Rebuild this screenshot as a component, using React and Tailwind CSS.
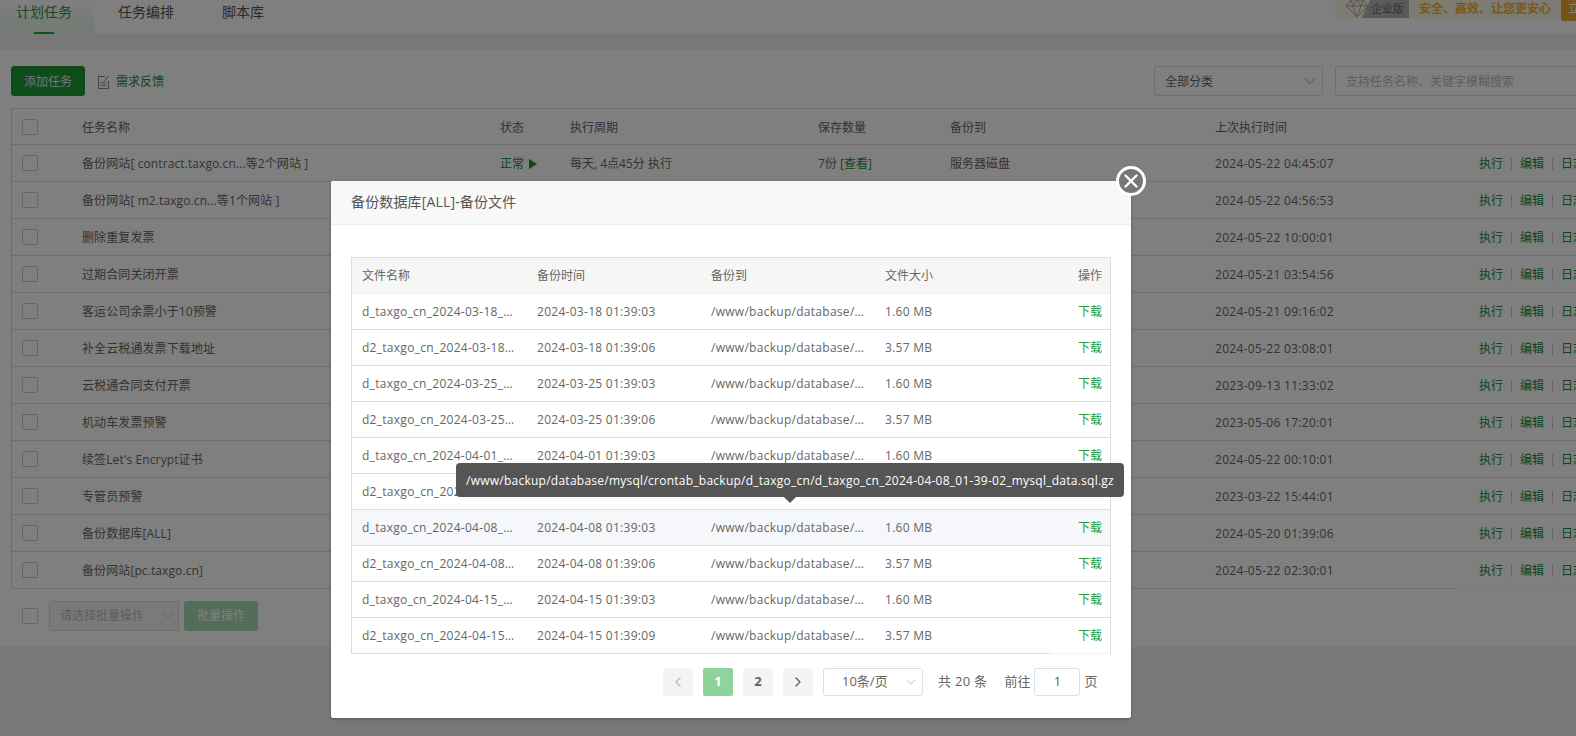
import React from "react";
import { ChevronDown, ChevronLeft, ChevronRight } from "lucide-react";

const tasks = [
  { name: "备份网站[ contract.taxgo.cn...等2个网站 ]", last: "2024-05-22 04:45:07" },
  { name: "备份网站[ m2.taxgo.cn...等1个网站 ]", last: "2024-05-22 04:56:53" },
  { name: "删除重复发票", last: "2024-05-22 10:00:01" },
  { name: "过期合同关闭开票", last: "2024-05-21 03:54:56" },
  { name: "客运公司余票小于10预警", last: "2024-05-21 09:16:02" },
  { name: "补全云税通发票下载地址", last: "2024-05-22 03:08:01" },
  { name: "云税通合同支付开票", last: "2023-09-13 11:33:02" },
  { name: "机动车发票预警", last: "2023-05-06 17:20:01" },
  { name: "续签Let's Encrypt证书", last: "2024-05-22 00:10:01" },
  { name: "专管员预警", last: "2023-03-22 15:44:01" },
  { name: "备份数据库[ALL]", last: "2024-05-20 01:39:06" },
  { name: "备份网站[pc.taxgo.cn]", last: "2024-05-22 02:30:01" },
];

const backups = [
  ["d_taxgo_cn", "2024-03-18", "01:39:03", "1.60 MB"],
  ["d2_taxgo_cn", "2024-03-18", "01:39:06", "3.57 MB"],
  ["d_taxgo_cn", "2024-03-25", "01:39:03", "1.60 MB"],
  ["d2_taxgo_cn", "2024-03-25", "01:39:06", "3.57 MB"],
  ["d_taxgo_cn", "2024-04-01", "01:39:03", "1.60 MB"],
  ["d2_taxgo_cn", "2024-04-01", "01:39:06", "3.57 MB"],
  ["d_taxgo_cn", "2024-04-08", "01:39:03", "1.60 MB"],
  ["d2_taxgo_cn", "2024-04-08", "01:39:06", "3.57 MB"],
  ["d_taxgo_cn", "2024-04-15", "01:39:03", "1.60 MB"],
  ["d2_taxgo_cn", "2024-04-15", "01:39:09", "3.57 MB"],
];

const Checkbox = () => (
  <span className="block w-4 h-4 rounded-[2px] border border-[#ccc] bg-white" />
);

const Actions = () => (
  <div className="flex items-center text-[#1c8a32] whitespace-nowrap">
    <span>执行</span>
    <span className="mx-[8px] h-3 w-px bg-[#ccc]" />
    <span>编辑</span>
    <span className="mx-[8px] h-3 w-px bg-[#ccc]" />
    <span>日志</span>
  </div>
);

const TaskTable = () => (
  <table className="w-[1640px] table-fixed border-separate border-spacing-0 border-t border-l border-[#ddd] text-[12px] text-[#666]">
    <colgroup>
      <col className="w-[60px]" />
      <col className="w-[418px]" />
      <col className="w-[70px]" />
      <col className="w-[248px]" />
      <col className="w-[132px]" />
      <col className="w-[265px]" />
      <col className="w-[249px]" />
      <col />
    </colgroup>
    <thead>
      <tr className="h-9">
        <th className="pl-[10px] border-b border-[#ddd] font-normal text-left"><Checkbox /></th>
        <th className="pl-[10px] pt-[2px] border-b border-[#ddd] font-normal text-left">任务名称</th>
        <th className="pl-[10px] pt-[2px] border-b border-[#ddd] font-normal text-left">状态</th>
        <th className="pl-[10px] pt-[2px] border-b border-[#ddd] font-normal text-left">执行周期</th>
        <th className="pl-[10px] pt-[2px] border-b border-[#ddd] font-normal text-left">保存数量</th>
        <th className="pl-[10px] pt-[2px] border-b border-[#ddd] font-normal text-left">备份到</th>
        <th className="pl-[10px] pt-[2px] border-b border-[#ddd] font-normal text-left">上次执行时间</th>
        <th className="border-b border-[#ddd]" />
      </tr>
    </thead>
    <tbody>
      {tasks.map((task, i) => (
        <tr key={task.name} className="h-[37px]">
          <td className="pl-[10px] border-b border-[#ddd]"><Checkbox /></td>
          <td className="pl-[10px] pt-[2px] border-b border-[#ddd] whitespace-nowrap tracking-[0.1px]">{task.name}</td>
          <td className="pl-[10px] pt-[2px] border-b border-[#ddd] text-[#1c8a32] whitespace-nowrap">
            {i === 0 && (
              <span className="inline-flex items-center gap-[5px]">
                正常
                <span className="w-0 h-0 border-y-[5px] border-l-[8px] border-y-transparent border-l-[#1c8a32]" />
              </span>
            )}
          </td>
          <td className="pl-[10px] pt-[2px] border-b border-[#ddd] whitespace-nowrap">{i === 0 && "每天, 4点45分 执行"}</td>
          <td className="pl-[10px] pt-[2px] border-b border-[#ddd] whitespace-nowrap">
            {i === 0 && (
              <>
                7份 <span className="text-[#1c8a32]">[查看]</span>
              </>
            )}
          </td>
          <td className="pl-[10px] pt-[2px] border-b border-[#ddd] whitespace-nowrap">{i === 0 && "服务器磁盘"}</td>
          <td className="pl-[10px] pt-[2px] border-b border-[#ddd] whitespace-nowrap tracking-[0.3px]">{task.last}</td>
          <td className={`pl-[25px] pt-[2px] border-b ${i === 11 ? "border-[#f4f4f4]" : "border-[#ddd]"}`}><Actions /></td>
        </tr>
      ))}
    </tbody>
  </table>
);

const PageButton = ({ children, className = "" }) => (
  <span className={`w-[30px] h-[28px] rounded-[2px] flex items-center justify-center text-[13px] font-bold ${className}`}>
    {children}
  </span>
);

const BackupModal = () => (
  <div className="absolute left-[331px] top-[181px] w-[800px] h-[537px] bg-white rounded-[2px] shadow-[0_1px_3px_rgba(0,0,0,0.3)] text-[12px] text-[#666]">
    <div className="h-[44px] flex items-center pl-5 pb-[2px] bg-[#f8f8f8] border-b border-[#eee] rounded-t-[2px] text-[14px] text-[#555] tracking-[0.15px]">
      备份数据库[ALL]-备份文件
    </div>
    <div className="mt-[32px] mx-5 w-[760px] border-t border-x border-[#ddd]">
      <table className="w-full table-fixed border-separate border-spacing-0">
        <colgroup>
          <col className="w-[175px]" />
          <col className="w-[174px]" />
          <col className="w-[174px]" />
          <col className="w-[175px]" />
          <col />
        </colgroup>
        <thead>
          <tr className="h-9 bg-[#f6f6f6]">
            <th className="px-[10px] pt-px border-b border-[#eee] font-normal text-left">文件名称</th>
            <th className="px-[10px] pt-px border-b border-[#eee] font-normal text-left">备份时间</th>
            <th className="px-[10px] pt-px border-b border-[#eee] font-normal text-left">备份到</th>
            <th className="px-[10px] pt-px border-b border-[#eee] font-normal text-left">文件大小</th>
            <th className="pr-2 pt-px border-b border-[#eee] font-normal text-right">操作</th>
          </tr>
        </thead>
        <tbody>
          {backups.map(([db, date, time, size], i) => {
            const file = `${db}_${date}_01-39-02_mysql_data.sql.gz`;
            return (
              <tr key={file} className={`h-9 tracking-[0.28px] ${i === 6 ? "bg-[#f5f7fa]" : ""}`}>
                <td className="px-[10px] pt-px border-b border-[#ddd] truncate">{file}</td>
                <td className="px-[10px] pt-px border-b border-[#ddd] truncate">{date} {time}</td>
                <td className="px-[10px] pt-px border-b border-[#ddd] truncate">/www/backup/database/mysql/crontab_backup/{db}/{file}</td>
                <td className="px-[10px] pt-px border-b border-[#ddd] truncate">{size}</td>
                <td className={`pr-2 pt-px border-b text-right text-[#259c40] tracking-normal ${i === 9 ? "border-[#f4f4f4]" : "border-[#ddd]"}`}>下载</td>
              </tr>
            );
          })}
        </tbody>
      </table>
    </div>
    <div className="mt-[14px] flex items-center pl-[332px] text-[13px] text-[#666]">
      <PageButton className="bg-[#f4f4f5] text-[#bbb]"><ChevronLeft size={16} /></PageButton>
      <PageButton className="ml-[10px] bg-[#90d29c] text-white">1</PageButton>
      <PageButton className="ml-[10px] bg-[#f4f4f5] text-[#606266]">2</PageButton>
      <PageButton className="ml-[10px] bg-[#f4f4f5] text-[#606266]"><ChevronRight size={16} /></PageButton>
      <div className="ml-[10px] w-[100px] h-[28px] flex items-center justify-between border border-[#dcdfe6] rounded-[3px] pl-[18px] pr-[3px]">
        <span>10条/页</span>
        <ChevronDown size={16} strokeWidth={1} className="text-[#aaa]" />
      </div>
      <span className="ml-[15px] tracking-[0.3px]">共 20 条</span>
      <span className="ml-[17px]">前往</span>
      <span className="ml-[4px] w-[46px] h-[28px] flex items-center justify-center border border-[#dcdfe6] rounded-[3px]">1</span>
      <span className="ml-[4px]">页</span>
    </div>
  </div>
);

export default function App() {
  return (
    <div className="relative h-screen overflow-hidden bg-[#f0f0f0] font-['Open_Sans','Noto_Sans_CJK_SC',sans-serif]">
      <div className="h-[34px] bg-white flex text-[14px] text-[#555]">
        <div className="relative pl-4 pr-[22px] pt-[1px] h-full bg-linear-to-b from-white to-[#e3f3e6] text-[#2a9444]">
          计划任务
          <span className="absolute left-[34px] bottom-0 w-5 h-[2px] bg-[#20a53a]" />
        </div>
        <div className="px-6 pt-[1px]">任务编排</div>
        <div className="px-6 pt-[1px]">脚本库</div>
        <div className="ml-auto flex items-start">
          <div className="relative h-[19px] w-[226px] flex bg-[#fdf6e6] rounded-b-[2px]">
            <span className="ml-[27px] w-[47px] h-[18px] bg-[#b4b4b4] text-[11px] text-[#666] text-right pr-[5px] leading-[18px] [clip-path:polygon(8px_0,100%_0,100%_100%,0_100%)]">企业版</span>
            <svg className="absolute left-[10px] -top-[2px]" width="24" height="20" viewBox="0 0 24 20" fill="#fdf6e6" stroke="#aaa" strokeWidth="1">
              <path d="M6 2h12l5 6-11 11L1 8z" />
              <path d="M1 8h22M8 8l4 11 4-11M6 2l2 6 4-6 4 6 2-6" fill="none" />
            </svg>
            <span className="ml-[10px] text-[12px] font-bold text-[#f2b232] leading-[18px] whitespace-nowrap">安全、高效、让您更安心</span>
          </div>
          <div className="w-[15px] h-[21px] bg-[#eaa82a] text-[#fff] text-[12px] pl-[7px] rounded-bl-[2px] overflow-hidden whitespace-nowrap">立</div>
        </div>
      </div>

      <div className="mt-4 h-[597px] bg-white overflow-hidden pt-4">
        <div className="flex h-[30px] pl-[11px]">
          <button className="w-[74px] pt-[2px] rounded-[3px] bg-[#1d9a35] text-[12px] text-[#e8e8e8]">添加任务</button>
          <div className="ml-3 pt-[2px] flex items-center gap-[6px] text-[12px] text-[#1c8a32]">
            <svg width="13" height="15" viewBox="0 0 13 15" fill="none" stroke="#888" strokeWidth="1">
              <path d="M8 1.5H1.5v12h10V6" />
              <path d="M11.5 0.8 7 6.5M3.5 8h6M3.5 10.5h6" />
            </svg>
            需求反馈
          </div>
          <div className="ml-auto w-[169px] pt-[2px] flex items-center justify-between border border-[#ddd] rounded-[3px] pl-[10px] pr-[2px] text-[12px] text-[#666]">
            全部分类
            <ChevronDown size={20} strokeWidth={1} className="text-[#999] -mt-[3px]" />
          </div>
          <div className="ml-3 w-[241px] pt-[2px] flex items-center border border-[#ddd] border-r-0 rounded-l-[3px] pl-[10px] text-[12px] text-[#bbb]">
            支持任务名称、关键字模糊搜索
          </div>
        </div>
        <div className="mt-3 pl-[11px]">
          <TaskTable />
        </div>
        <div className="mt-3 pl-[22px] flex items-center">
          <Checkbox />
          <div className="ml-[11px] w-[130px] h-[30px] flex items-center justify-between border border-[#ddd] bg-[#f5f5f5] rounded-[3px] pl-[10px] text-[12px] text-[#bbb]">
            请选择批量操作
            <ChevronDown size={20} strokeWidth={1} className="text-[#bbb] -mt-[3px]" />
          </div>
          <button className="ml-[5px] w-[74px] h-[30px] rounded-[3px] bg-[#a6dbb0] text-[12px] text-white">批量操作</button>
        </div>
      </div>

      <div className="absolute inset-0 bg-black/50" />

      <BackupModal />

      <div className="absolute left-[1116px] top-[166px] w-[30px] h-[30px] rounded-full bg-[#777] border-[3px] border-white flex items-center justify-center">
        <svg width="16" height="16" viewBox="0 0 16 16" stroke="#fff" strokeWidth="2.4" strokeLinecap="round">
          <path d="M2.5 2.5l11 11M13.5 2.5l-11 11" />
        </svg>
      </div>

      <div className="absolute left-[456px] top-[463px] h-[34px] px-[10px] pt-px flex items-center bg-[#555] rounded-[4px] text-[12px] tracking-[0.25px] text-white whitespace-nowrap">
        /www/backup/database/mysql/crontab_backup/d_taxgo_cn/d_taxgo_cn_2024-04-08_01-39-02_mysql_data.sql.gz
        <span className="absolute left-[328px] top-full w-0 h-0 border-x-[6px] border-t-[6px] border-x-transparent border-t-[#555]" />
      </div>
    </div>
  );
}
